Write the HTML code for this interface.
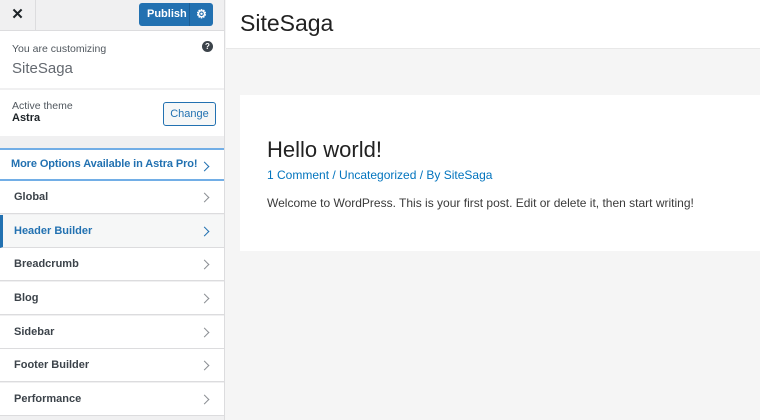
<!DOCTYPE html>
<html><head><style>
*{margin:0;padding:0;box-sizing:border-box}
body{width:760px;height:420px;overflow:hidden;font-family:"Liberation Sans",sans-serif;background:#f5f5f5;position:relative}
#sb{position:absolute;left:0;top:0;width:225px;height:420px;background:#f0f0f1;border-right:1px solid #dcdcde}
.top{height:31px;border-bottom:1px solid #dcdcde;position:relative}
.close{position:absolute;left:0;top:0;width:36px;height:30px;border-right:1px solid #dcdcde;font-size:15px;font-weight:bold;text-align:center;line-height:30px;color:#1d2327}
.pub{position:absolute;left:139px;top:3px;width:74px;height:23px;background:#2271b1;border-radius:3px;color:#fff;font-size:11px;font-weight:bold;line-height:23px;padding-left:8px}
.pub span{position:absolute;right:0;top:0;width:24px;height:23px;border-left:1px solid #1a5e96;text-align:center;font-size:12px}
.sec{background:#fff;position:absolute;left:0;width:224px}
.row{position:absolute;left:0;width:224px;height:33px;background:#fff;border-bottom:1px solid #dcdcde;font-size:11px;font-weight:bold;color:#3c434a;padding-left:14px;line-height:32px}
.row:after{content:"";position:absolute;right:16px;top:13px;width:6px;height:6px;border-right:1.5px solid #8c8f94;border-top:1.5px solid #8c8f94;transform:rotate(45deg)}
.row.b:after{border-color:#2271b1}
</style></head><body>
<div id="sb">
<div class="top"><div class="close">✕</div><div class="pub">Publish<span>⚙</span></div></div>
<div class="sec" style="top:31px;height:57px">
<div style="position:absolute;left:12px;top:12px;font-size:10.5px;color:#50575e">You are customizing</div>
<div style="position:absolute;left:12px;top:29px;font-size:15px;color:#646970">SiteSaga</div>
<div style="position:absolute;left:202px;top:10px;width:11px;height:11px;border-radius:50%;background:#3c434a;color:#fff;font-size:8px;font-weight:bold;text-align:center;line-height:11px">?</div>
</div>
<div class="sec" style="top:90px;height:46px">
<div style="position:absolute;left:12px;top:10px;font-size:10.5px;color:#50575e">Active theme</div>
<div style="position:absolute;left:12px;top:22px;font-size:11px;font-weight:bold;color:#1d2327">Astra</div>
<div style="position:absolute;left:163px;top:12px;width:53px;height:24px;border:1px solid #2271b1;border-radius:3px;color:#2271b1;font-size:11px;text-align:center;line-height:22px;background:#f6f7f7">Change</div>
</div>
<div class="row b" style="top:148px;height:33px;border-top:2px solid #72aee6;border-bottom:2px solid #72aee6;color:#2271b1;padding-left:11px;line-height:29px;font-size:11px;letter-spacing:-0.1px">More Options Available in Astra Pro!</div>
<div class="row" style="top:181px">Global</div>
<div class="row b" style="top:215px;background:#f6f7f7;border-left:3px solid #2271b1;padding-left:11px;color:#2271b1">Header Builder</div>
<div class="row" style="top:248px">Breadcrumb</div>
<div class="row" style="top:282px">Blog</div>
<div class="row" style="top:316px">Sidebar</div>
<div class="row" style="top:349px">Footer Builder</div>
<div class="row" style="top:383px">Performance</div>
</div>
<div style="position:absolute;left:226px;top:0;width:534px;height:49px;background:#fff;border-bottom:1px solid #e8e8e8">
<div style="position:absolute;left:14px;top:10px;font-size:23px;color:#222">SiteSaga</div></div>
<div style="position:absolute;left:240px;top:95px;width:520px;height:156px;background:#fff">
<div style="position:absolute;left:27px;top:42px;font-size:22px;color:#222">Hello world!</div>
<div style="position:absolute;left:27px;top:73px;font-size:12px;color:#0274be">1 Comment / Uncategorized / By SiteSaga</div>
<div style="position:absolute;left:27px;top:101px;font-size:12px;color:#3a3a3a">Welcome to WordPress. This is your first post. Edit or delete it, then start writing!</div>
</div>
</body></html>
